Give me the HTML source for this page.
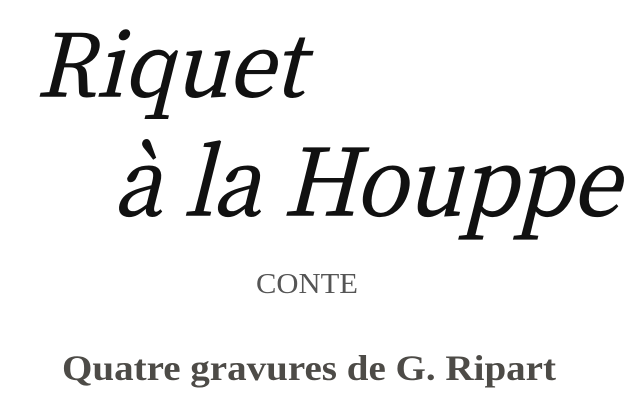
<!DOCTYPE html>
<html><head><meta charset="utf-8"><style>
html,body{margin:0;padding:0;background:#fff;}
svg{display:block}
.b{font-family:"Noto Serif CJK SC","Liberation Serif",serif;font-style:normal;}
.r{font-family:"Liberation Serif",serif;}
</style></head><body>
<svg width="640" height="416" xmlns="http://www.w3.org/2000/svg">
<rect width="640" height="416" fill="#fff"/>
<g transform="translate(36,96) skewX(-14)">
<text class="b" x="0" y="0" font-size="86" fill="#111" stroke="#111" stroke-width="1.4" textLength="268" lengthAdjust="spacingAndGlyphs">Riquet</text>
</g>
<g transform="translate(113,215) skewX(-14)">
<text class="b" x="0" y="0" font-size="92" fill="#111" stroke="#111" stroke-width="1.4" textLength="506" lengthAdjust="spacingAndGlyphs">à la Houppe</text>
</g>
<text class="r" x="256" y="293" font-size="29" fill="#555" textLength="102" lengthAdjust="spacingAndGlyphs">CONTE</text>
<text class="r" x="62" y="380" font-weight="bold" font-size="36" fill="#4d4b47" textLength="494" lengthAdjust="spacingAndGlyphs">Quatre gravures de G. Ripart</text>
</svg>
</body></html>
